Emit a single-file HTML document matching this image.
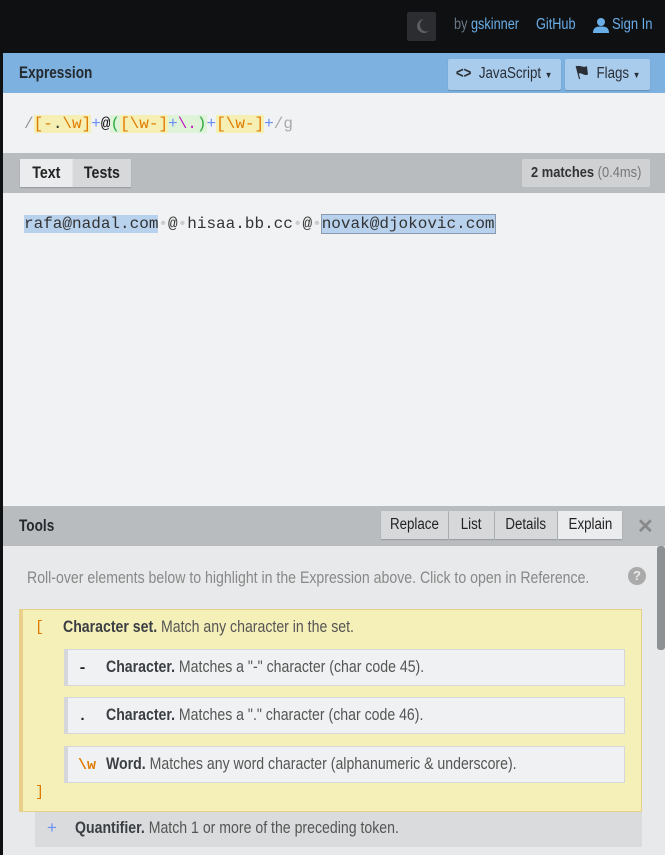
<!DOCTYPE html>
<html><head><meta charset="utf-8"><style>
*{margin:0;padding:0;box-sizing:border-box}
body{width:665px;height:855px;overflow:hidden;background:#0f1012;font-family:"Liberation Sans",sans-serif;position:relative}
.abs{position:absolute}
.n{transform:scaleX(.86);transform-origin:0 50%;white-space:nowrap}
.nc{display:inline-block;transform:scaleX(.86);transform-origin:50% 50%;white-space:nowrap}
.mono{font-family:"Liberation Mono",monospace;font-size:16px}
.btn{position:absolute;background:#a9cbec;border-radius:2px;box-shadow:0 1px 1px rgba(0,0,0,.2);color:#2a2f36;font-size:15.5px;line-height:29px;text-align:center;white-space:nowrap}
.tab{position:absolute;font-size:15.5px;line-height:28px;text-align:center;color:#222;background:#d6d8da;box-shadow:0 1px 1px rgba(0,0,0,.2)}
.ibox{position:absolute;left:64px;width:561px;height:37px;background:#f0f1f2;border:1px solid #d5d7da;border-left:4px solid #d5d7da;font-size:16.5px;line-height:35px;color:#555;white-space:nowrap}
.ibox .t{display:inline-block;transform:scaleX(.855);transform-origin:0 50%}
b{color:#3b3f44}
</style></head><body>
<!-- top bar -->
<div class="abs" style="left:407px;top:12px;width:29px;height:29px;background:#2b2d30;border-radius:2px"></div>
<svg class="abs" style="left:413px;top:17px" width="18" height="18" viewBox="0 0 18 18"><path d="M11 2A7 7 0 1 0 16 14A6 6 0 0 1 11 2Z" fill="#5c5f63"/></svg>
<div class="abs n" style="left:454px;top:16px;font-size:15.5px;color:#6b7886;transform:scaleX(.82)">by <span style="color:#6aaee8">gskinner</span></div>
<div class="abs n" style="left:536px;top:16px;font-size:15.5px;color:#6aaee8;transform:scaleX(.82)">GitHub</div>
<svg class="abs" style="left:593px;top:17px" width="16" height="16" viewBox="0 0 16 16"><circle cx="8" cy="5" r="4" fill="#6aaee8"/><path d="M0 16C0 10 4 9.5 8 9.5S16 10 16 16Z" fill="#6aaee8"/></svg>
<div class="abs n" style="left:612px;top:16px;font-size:15.5px;color:#6aaee8;transform:scaleX(.84)">Sign In</div>
<!-- main panel -->
<div class="abs" style="left:3px;top:53px;width:662px;height:802px;background:#f1f2f3"></div>
<div class="abs" style="left:3px;top:53px;width:662px;height:40px;background:#7db1e0"></div>
<div class="abs n" style="left:19px;top:63px;font-size:17px;font-weight:bold;color:#24292e;transform:scaleX(.8)">Expression</div>
<div class="btn" style="left:448px;top:59px;width:113px"><span class="nc"><b style="color:#2a2f36">&lt;&gt;</b>&nbsp; JavaScript <span style="font-size:9px">▼</span></span></div>
<div class="btn" style="left:565px;top:59px;width:85px"><span class="nc"><svg width="16" height="15" viewBox="0 0 16 15" style="vertical-align:-2px"><path d="M1 1L5 14M2 2C5 0 8 4 13 2L14 9C10 11 7 6 4 8Z" fill="#2a2f36" stroke="#2a2f36" stroke-width="1.3"/></svg>&nbsp; Flags <span style="font-size:9px">▼</span></span></div>
<div class="abs mono" style="left:24px;top:113px;line-height:22px;color:#999"><span>/</span><span style="background:#f6efb3;color:#e07b00">[-<span style="color:#333">.</span>\w]</span><span style="color:#6a8ff5">+</span><span style="color:#111">@</span><span style="background:#dff3d9"><span style="color:#2bab3f">(</span><span style="background:#f6efb3;color:#e07b00">[\w-]</span><span style="color:#6a8ff5">+</span><span style="color:#c020c0">\.</span><span style="color:#2bab3f">)</span></span><span style="color:#6a8ff5">+</span><span style="background:#f6efb3;color:#e07b00">[\w-]</span><span style="color:#6a8ff5">+</span><span style="color:#aaa">/g</span></div>
<div class="abs" style="left:3px;top:153px;width:662px;height:40px;background:#b9bcbf"></div>
<div class="tab" style="left:20px;top:159px;width:53px;background:#ebeced;font-weight:bold;font-size:16.5px"><span class="nc">Text</span></div>
<div class="tab" style="left:73px;top:159px;width:58px;font-weight:bold;font-size:16.5px"><span class="nc">Tests</span></div>
<div class="abs" style="left:522px;top:159px;width:128px;height:28px;background:#cfd1d3;border-radius:2px;font-size:15px;line-height:28px;text-align:center;color:#777"><span class="nc"><b style="color:#333">2 matches</b> (0.4ms)</span></div>
<div class="abs mono" style="left:24px;top:213px;line-height:22px;color:#333"><span style="background:#b8d1ec">rafa@nadal.com</span><span style="color:#ccc">•</span>@<span style="color:#ccc">•</span>hisaa.bb.cc<span style="color:#ccc">•</span>@<span style="color:#ccc">•</span><span style="background:#b8d1ec;outline:1px solid #8a9bb0">novak@djokovic.com</span></div>
<!-- tools -->
<div class="abs" style="left:3px;top:506px;width:662px;height:40px;background:#b9bcbf"></div>
<div class="abs n" style="left:19px;top:516px;font-size:17px;font-weight:bold;color:#24292e;transform:scaleX(.8)">Tools</div>
<div class="tab" style="left:381px;top:511px;width:67px"><span class="nc">Replace</span></div>
<div class="tab" style="left:449px;top:511px;width:45px"><span class="nc">List</span></div>
<div class="tab" style="left:495px;top:511px;width:62px"><span class="nc">Details</span></div>
<div class="tab" style="left:558px;top:511px;width:64px;background:#ebeced"><span class="nc">Explain</span></div>
<div class="abs" style="left:637px;top:514px;font-size:20px;font-weight:bold;color:#888">✕</div>
<div class="abs" style="left:3px;top:546px;width:662px;height:309px;background:#e8e9ea"></div>
<div class="abs" style="left:657px;top:546px;width:8px;height:104px;background:#8e9194;border-radius:3px"></div>
<div class="abs n" style="left:27px;top:568px;font-size:17px;color:#888;transform:scaleX(.83)">Roll-over elements below to highlight in the Expression above. Click to open in Reference.</div>
<div class="abs" style="left:628px;top:567px;width:18px;height:18px;border-radius:50%;background:#aaa;color:#e8e9ea;font-size:13px;font-weight:bold;text-align:center;line-height:18px">?</div>
<div class="abs" style="left:19px;top:609px;width:623px;height:203px;background:#f5efb8;border:1px solid #e9d08a;border-left:4px solid #e9d08a"></div>
<div class="abs mono" style="left:35px;top:619px;color:#e07b00;font-size:15px">[</div>
<div class="abs n" style="left:63px;top:617px;font-size:17px;color:#555;transform:scaleX(.83)"><b>Character set.</b> Match any character in the set.</div>
<div class="ibox" style="top:649px"><span class="mono" style="display:inline-block;width:38px;padding-left:10px;color:#222;font-size:15px;font-weight:bold">-</span><span class="t"><b>Character.</b> Matches a "-" character (char code 45).</span></div>
<div class="ibox" style="top:697px"><span class="mono" style="display:inline-block;width:38px;padding-left:10px;color:#222;font-size:15px;font-weight:bold">.</span><span class="t"><b>Character.</b> Matches a "." character (char code 46).</span></div>
<div class="ibox" style="top:746px"><span class="mono" style="display:inline-block;width:38px;padding-left:10px;color:#e07b00;font-size:15px;font-weight:bold">\w</span><span class="t"><b>Word.</b> Matches any word character (alphanumeric &amp; underscore).</span></div>
<div class="abs mono" style="left:35px;top:784px;color:#e07b00;font-size:15px">]</div>
<div class="abs" style="left:35px;top:812px;width:607px;height:35px;background:#d9dbdc"></div>
<div class="abs" style="left:47px;top:818px;font-size:17px;color:#555;white-space:nowrap"><span style="color:#6a8ff5;display:inline-block;width:28px">+</span><span style="display:inline-block;transform:scaleX(.83);transform-origin:0 50%"><b>Quantifier.</b> Match 1 or more of the preceding token.</span></div>
</body></html>
